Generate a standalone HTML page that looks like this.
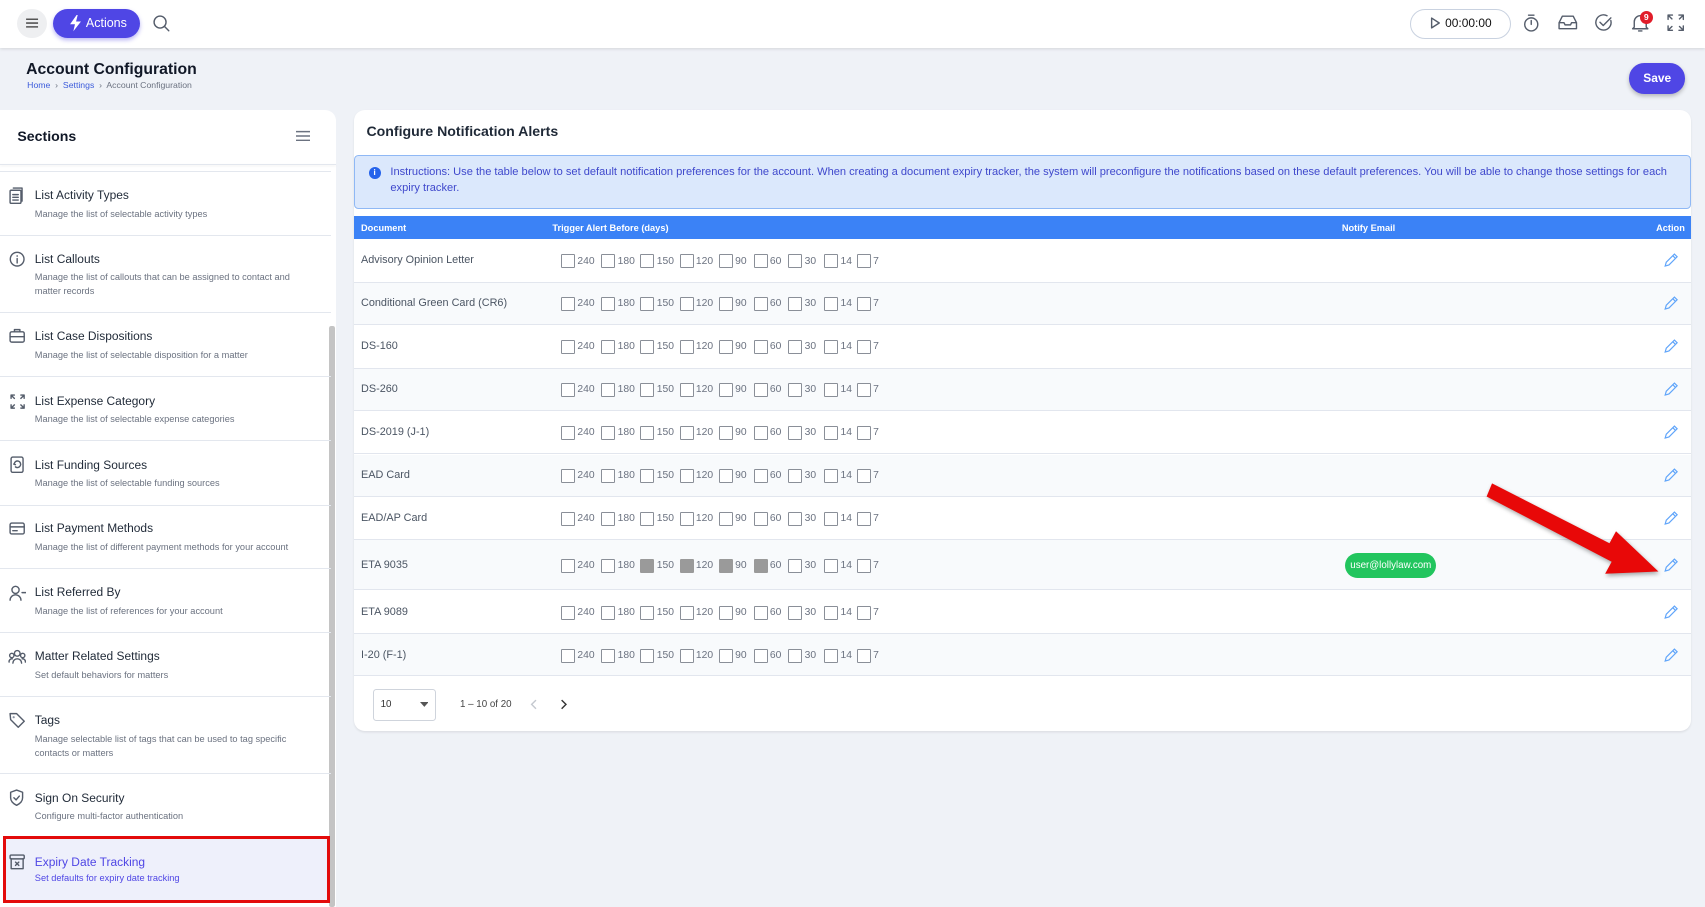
<!DOCTYPE html>
<html><head><meta charset="utf-8"><style>
html,body{margin:0;padding:0;}
body{width:1705px;height:906px;overflow:hidden;background:#eff2f7;font-family:"Liberation Sans",sans-serif;}
#w{zoom:1.0874;position:relative;width:1568px;height:834px;}
.a{position:absolute;}
.hdr{left:0;top:0;width:1568px;height:44px;background:#fff;box-shadow:0 1px 3px rgba(0,0,0,.12);}
.ic{stroke:#555d6b;fill:none;stroke-width:1.3;stroke-linecap:round;stroke-linejoin:round}
.item{width:309px;height:834px;}
.item .t{position:absolute;left:32px;font-size:11px;color:#1f2937;white-space:nowrap;}
.item .d{position:absolute;left:32px;font-size:8.5px;color:#6b7280;line-height:13px;width:260px;}
.sep{position:absolute;left:0;width:304px;height:1px;background:#e3e7ee;}
.row{position:absolute;left:326px;width:1229px;border-bottom:1px solid #e2e6ee;}
.row.g{background:#f8fafc;}
.cb{position:absolute;width:11px;height:11px;border:1px solid #8a8f98;border-radius:1px;background:#fff;}
.cb.on{background:#9a9a9a;border-color:#9a9a9a;}
.cl{position:absolute;font-size:9.5px;color:#6b7280;}
</style></head><body><div id="w">
<div class="a hdr"></div>
<div class="a" style="left:16px;top:8px;width:27px;height:27px;border-radius:50%;background:#eeeff1"></div>
<svg class="a" style="left:23px;top:15px" width="13" height="13"><path d="M1 3h11M1 6.5h11M1 10h11" stroke="#555" stroke-width="1.4"/></svg>
<div class="a" style="left:49px;top:8px;width:80px;height:27px;border-radius:14px;background:#4f46e5;box-shadow:0 2px 4px rgba(79,70,229,.4)"></div>
<svg class="a" style="left:63px;top:14px" width="12" height="15"><path d="M7 0L1 8.5h4.5L4 15l7-9H6.5L8 0z" fill="#fff"/></svg>
<div class="a" style="left:79px;top:15px;font-size:11.5px;color:#fff">Actions</div>
<svg class="a" style="left:141px;top:14px" width="16" height="16"><circle cx="6.5" cy="6.5" r="5.5" class="ic"/><path d="M10.5 10.5l4 4" class="ic"/></svg>
<div class="a" style="left:1297px;top:8px;width:91px;height:26px;border:1px solid #c9d2e0;border-radius:14px;background:#fff"></div>
<svg class="a" style="left:1315px;top:16px" width="10" height="11"><path d="M1.5 1l7 4.5-7 4.5z" class="ic"/></svg>
<div class="a" style="left:1329px;top:15px;font-size:11px;color:#111">00:00:00</div>
<svg class="a" style="left:1400px;top:12px" width="17" height="19"><circle cx="8.5" cy="10.5" r="6" class="ic"/><path d="M6 2h5M8.5 10.5V7" class="ic"/></svg>
<svg class="a" style="left:1433px;top:13px" width="18" height="16"><path d="M1 8l3-6h10l3 6v5.5H1zM1 8h4.5l1 2h5l1-2H17" class="ic"/></svg>
<svg class="a" style="left:1466px;top:12px" width="18" height="18"><path d="M15.5 7A7 7 0 1 1 12 2.5" class="ic"/><path d="M5.5 8.5l3 3 7-7" class="ic"/></svg>
<svg class="a" style="left:1500px;top:12px" width="17" height="18"><path d="M3 13V8a5.5 5.5 0 0 1 11 0v5l1.5 1.5h-14zM7 16.5h3" class="ic"/></svg>
<div class="a" style="left:1508px;top:10px;width:12px;height:12px;border-radius:50%;background:#e11d2a;color:#fff;font-size:8px;text-align:center;line-height:12px;font-weight:bold">9</div>
<svg class="a" style="left:1533px;top:13px" width="16" height="16"><path d="M1 5V1h4M11 1h4v4M15 11v4h-4M5 15H1v-4M1 1l3.5 3.5M15 1l-3.5 3.5M15 15l-3.5-3.5M1 15l3.5-3.5" class="ic" stroke="#7a8290" stroke-width="1.1"/></svg>

<div class="a" style="left:24px;top:56px;font-size:14.5px;font-weight:bold;color:#111827">Account Configuration</div>
<div class="a" style="left:25px;top:74px;font-size:8px;color:#6b7280"><span style="color:#3b5bdb">Home</span> &nbsp;&#8250;&nbsp; <span style="color:#3b5bdb">Settings</span> &nbsp;&#8250;&nbsp; Account Configuration</div>
<div class="a" style="left:1498px;top:58px;width:52px;height:28px;border-radius:14px;background:#4f46e5;color:#fff;font-size:11px;font-weight:bold;text-align:center;line-height:28px;box-shadow:0 2px 4px rgba(0,0,0,.25)">Save</div>

<!-- sidebar -->
<div class="a" style="left:0;top:101px;width:309px;height:733px;background:#fff;border-radius:0 10px 0 0"></div>
<div class="a" style="left:16px;top:118px;font-size:13px;font-weight:bold;color:#111827">Sections</div>
<svg class="a" style="left:272px;top:120px" width="13" height="11"><path d="M0 1.5h13M0 5.5h13M0 9.5h13" stroke="#6b7280" stroke-width="1.3"/></svg>
<div class="a" style="left:0;top:151px;width:309px;height:1px;background:#e3e7ee;box-shadow:0 1px 2px rgba(0,0,0,.08)"></div>
<div class="sep" style="top:157px"></div>
<div class="a" style="left:303px;top:300px;width:5px;height:534px;background:#c4c4c4;border-radius:2px"></div>
<div class="a item" style="left:0;top:0">
<div class="t" style="top:173px">List Activity Types</div><div class="d" style="top:190px">Manage the list of selectable activity types</div>
<div class="sep" style="top:216px"></div>
<div class="t" style="top:232px">List Callouts</div><div class="d" style="top:248px">Manage the list of callouts that can be assigned to contact and matter records</div>
<div class="sep" style="top:287px"></div>
<div class="t" style="top:303px">List Case Dispositions</div><div class="d" style="top:320px">Manage the list of selectable disposition for a matter</div>
<div class="sep" style="top:346px"></div>
<div class="t" style="top:362px">List Expense Category</div><div class="d" style="top:379px">Manage the list of selectable expense categories</div>
<div class="sep" style="top:405px"></div>
<div class="t" style="top:421px">List Funding Sources</div><div class="d" style="top:438px">Manage the list of selectable funding sources</div>
<div class="sep" style="top:464px"></div>
<div class="t" style="top:479px">List Payment Methods</div><div class="d" style="top:497px">Manage the list of different payment methods for your account</div>
<div class="sep" style="top:522px"></div>
<div class="t" style="top:538px">List Referred By</div><div class="d" style="top:555px">Manage the list of references for your account</div>
<div class="sep" style="top:581px"></div>
<div class="t" style="top:597px">Matter Related Settings</div><div class="d" style="top:614px">Set default behaviors for matters</div>
<div class="sep" style="top:640px"></div>
<div class="t" style="top:656px">Tags</div><div class="d" style="top:673px">Manage selectable list of tags that can be used to tag specific contacts or matters</div>
<div class="sep" style="top:711px"></div>
<div class="t" style="top:727px">Sign On Security</div><div class="d" style="top:744px">Configure multi-factor authentication</div>
</div>
<div class="a" style="left:3px;top:769px;width:295px;height:56px;border:3px solid #e30b0b;background:#eef0fb"></div>
<div class="a" style="left:32px;top:786px;font-size:11px;color:#4f46e5">Expiry Date Tracking</div>
<div class="a" style="left:32px;top:803px;font-size:8.5px;color:#4f46e5">Set defaults for expiry date tracking</div>
<!-- sidebar icons -->
<svg class="a" style="left:8px;top:172px" width="14" height="16"><rect x="1" y="3" width="10" height="12" rx="1" class="ic" stroke="#8a93a3" stroke-width="1.1"/><path d="M4 1h8v12M3.5 7h5M3.5 9.5h5M3.5 12h5" class="ic" stroke="#8a93a3" stroke-width="1.1"/></svg>
<svg class="a" style="left:8px;top:231px" width="15" height="15"><circle cx="7.5" cy="7.5" r="6.3" class="ic" stroke="#8a93a3" stroke-width="1.1"/><path d="M7.5 7v4M7.5 4.5v.3" class="ic" stroke="#8a93a3" stroke-width="1.1"/></svg>
<svg class="a" style="left:8px;top:302px" width="15" height="14"><rect x="1" y="3.5" width="13" height="9.5" rx="1.5" class="ic" stroke="#8a93a3" stroke-width="1.1"/><path d="M5 3.5V1.5h5v2M1 8h13" class="ic" stroke="#8a93a3" stroke-width="1.1"/></svg>
<svg class="a" style="left:9px;top:362px" width="14" height="14"><path d="M1 4V1h3M1 1l3 3M13 4V1h-3M13 1l-3 3M1 10v3h3M1 13l3-3M13 10v3h-3M13 13l-3-3" class="ic" stroke="#8a93a3" stroke-width="1"/></svg>
<svg class="a" style="left:9px;top:419px" width="13" height="16"><rect x="1" y="1" width="11" height="14" rx="1.5" class="ic" stroke="#8a93a3" stroke-width="1.1"/><path d="M4.5 6l-1 1.5 1.5 .5M3.8 7.3A3 3 0 1 1 5 10" class="ic" stroke="#8a93a3" stroke-width="1"/></svg>
<svg class="a" style="left:8px;top:480px" width="15" height="12"><rect x="1" y="1" width="13" height="10" rx="1.5" class="ic" stroke="#8a93a3" stroke-width="1.1"/><path d="M1 4.5h13M3.5 8h4" class="ic" stroke="#8a93a3" stroke-width="1.1"/></svg>
<svg class="a" style="left:8px;top:538px" width="16" height="15"><circle cx="6" cy="4.5" r="3.3" class="ic" stroke="#8a93a3" stroke-width="1.1"/><path d="M1 14a5 5 0 0 1 10 0M12 7h3.5" class="ic" stroke="#8a93a3" stroke-width="1.1"/></svg>
<svg class="a" style="left:7px;top:597px" width="17" height="14"><circle cx="8.5" cy="4" r="2.6" class="ic" stroke="#8a93a3" stroke-width="1.1"/><circle cx="3.5" cy="6" r="2" class="ic" stroke="#8a93a3" stroke-width="1.1"/><circle cx="13.5" cy="6" r="2" class="ic" stroke="#8a93a3" stroke-width="1.1"/><path d="M4.5 13a4 4 0 0 1 8 0M1 12a2.7 2.7 0 0 1 3-3M16 12a2.7 2.7 0 0 0-3-3" class="ic" stroke="#8a93a3" stroke-width="1.1"/></svg>
<svg class="a" style="left:8px;top:655px" width="15" height="15"><path d="M1 1.5h6l7 7-5.5 5.5-7-7z" class="ic" stroke="#8a93a3" stroke-width="1.1"/><circle cx="4.3" cy="4.8" r="1" fill="#8a93a3"/></svg>
<svg class="a" style="left:8px;top:726px" width="14" height="16"><path d="M7 1l5.5 2v5c0 3.5-2.5 5.5-5.5 7C4 13.5 1.5 11.5 1.5 8V3z" class="ic" stroke="#8a93a3" stroke-width="1.1"/><path d="M4.5 8l2 2 3-3.5" class="ic" stroke="#8a93a3" stroke-width="1.1"/></svg>
<svg class="a" style="left:8px;top:785px" width="15" height="15"><rect x="1" y="1" width="13" height="3.5" rx="1" class="ic" stroke="#4f46e5" stroke-width="1.1"/><path d="M2 4.5v9h11v-9M6 7.5l3 3M9 7.5l-3 3" class="ic" stroke="#4f46e5" stroke-width="1.1"/></svg>

<!-- content -->
<div class="a" style="left:326px;top:101px;width:1229px;height:571px;background:#fff;border-radius:10px;box-shadow:0 1px 2px rgba(0,0,0,.08)"></div>
<div class="a" style="left:337px;top:113px;font-size:13px;font-weight:bold;color:#1f2937">Configure Notification Alerts</div>
<div class="a" style="left:326px;top:143px;width:1227px;height:47px;background:#dbe8fc;border:1px solid #8fb8f5;border-radius:4px"></div>
<div class="a" style="left:339px;top:154px;width:11px;height:11px;border-radius:50%;background:#2563eb;color:#fff;font-size:8px;font-weight:bold;text-align:center;line-height:11px">i</div>
<div class="a" style="left:359px;top:152px;width:1190px;font-size:10.2px;line-height:14px;color:#3f48cc">Instructions: Use the table below to set default notification preferences for the account. When creating a document expiry tracker, the system will preconfigure the notifications based on these default preferences. You will be able to change those settings for each expiry tracker.</div>
<div class="a" style="left:326px;top:199px;width:1229px;height:21px;background:#3b82f6"></div>
<div class="a" style="left:332px;top:205px;font-size:8.5px;font-weight:bold;color:#fff">Document</div>
<div class="a" style="left:508px;top:205px;font-size:8.5px;font-weight:bold;color:#fff">Trigger Alert Before (days)</div>
<div class="a" style="left:1234px;top:205px;font-size:8.5px;font-weight:bold;color:#fff">Notify Email</div>
<div class="a" style="left:1523px;top:205px;font-size:8.5px;font-weight:bold;color:#fff">Action</div>
<div id="rows"></div>

<!-- pagination -->
<div class="a" style="left:343px;top:634px;width:56px;height:27px;border:1px solid #cfd4dc;border-radius:3px;background:#fff"></div>
<div class="a" style="left:350px;top:643px;font-size:9px;color:#333">10</div>
<svg class="a" style="left:386px;top:646px" width="8" height="5"><path d="M0 0h8L4 4.5z" fill="#555"/></svg>
<div class="a" style="left:423px;top:643px;font-size:9px;color:#444">1 – 10 of 20</div>
<svg class="a" style="left:487px;top:643px" width="7" height="10"><path d="M5.5 1L1.5 5l4 4" stroke="#c4c8cf" stroke-width="1.3" fill="none"/></svg>
<svg class="a" style="left:515px;top:643px" width="7" height="10"><path d="M1.5 1l4 4-4 4" stroke="#333" stroke-width="1.3" fill="none"/></svg>

<!-- red arrow -->
<svg class="a" style="left:1360px;top:440px" width="170" height="100"><g style="filter:drop-shadow(1px 2px 2px rgba(0,0,0,.35))"><path d="M12 5L120 60l6-11L165 86l-49 2 6-11L7 17z" fill="#e80808"/></g></svg>
</div>
<script>
var docs=["Advisory Opinion Letter","Conditional Green Card (CR6)","DS-160","DS-260","DS-2019 (J-1)","EAD Card","EAD/AP Card","ETA 9035","ETA 9089","I-20 (F-1)"];
var bounds=[220,260,299,339,378,418,457,497,543,583,622];
var xs=[516,553,589,625,661,693,725,758,788],ls=["240","180","150","120","90","60","30","14","7"];
var h="";
for(var i=0;i<10;i++){var t=bounds[i],ht=bounds[i+1]-t,c=t+ht/2;
h+='<div class="row'+(i%2?' g':'')+'" style="top:'+t+'px;height:'+(ht-1)+'px"></div>';
h+='<div class="a" style="left:332px;top:'+(c-6)+'px;font-size:10px;color:#4b5563">'+docs[i]+'</div>';
for(var j=0;j<9;j++){var on=(i==7&&j>=2&&j<=5);
h+='<div class="cb a'+(on?' on':'')+'" style="left:'+xs[j]+'px;top:'+(c-6)+'px"></div><div class="cl a" style="left:'+(xs[j]+15)+'px;top:'+(c-5)+'px">'+ls[j]+'</div>';}
h+='<svg class="a" style="left:1529px;top:'+(c-7)+'px" width="14" height="14"><path d="M2 12l1-3.5L10.5 1l2.5 2.5L5.5 11zM9 2.5l2.5 2.5" stroke="#60a5fa" stroke-width="1.1" fill="none"/></svg>';
if(i==7)h+='<div class="a" style="left:1237px;top:'+(c-11)+'px;width:84px;height:23px;border-radius:12px;background:#22c55e;color:#fff;font-size:9px;text-align:center;line-height:23px">user@lollylaw.com</div>';}
document.getElementById('rows').outerHTML=h;
</script>
</body></html>
